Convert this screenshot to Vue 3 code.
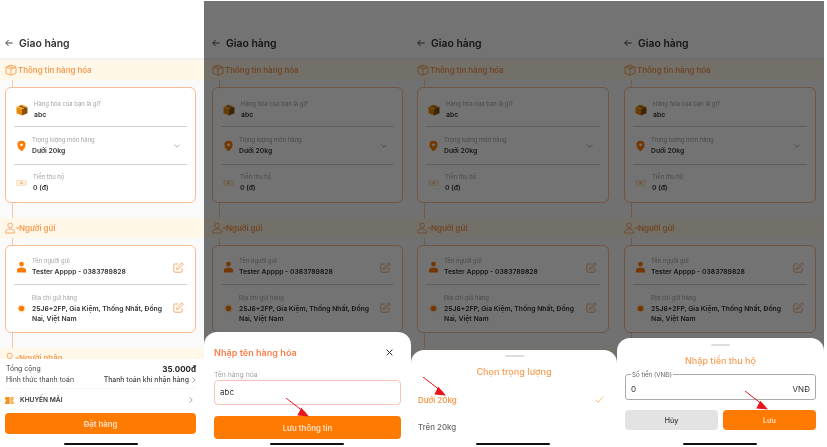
<template>
  <div class="board">
    <svg class="sprite" xmlns="http://www.w3.org/2000/svg">
      <symbol id="box-line" viewBox="0 0 12 12">
        <path d="M1 3.2 6 1l5 2.2v6L6 11.2 1 9.2zM1 3.2l5 2 5-2M6 5.2v6M3.5 2.1l5 2.1" fill="none" stroke="#f5a860" stroke-width="1" stroke-linejoin="round" />
      </symbol>
      <symbol id="box-fill" viewBox="0 0 12 12">
        <path d="M6 .6 11.5 3 6 5.3.5 3z" fill="#f4a12e" />
        <path d="M.5 3 6 5.3v6.2L.5 9.2z" fill="#e8890c" />
        <path d="M11.5 3 6 5.3v6.2l5.5-2.3z" fill="#8a5208" />
        <path d="M3 1.9 8.6 4.2v2l1-.4v-2L4 1.5z" fill="#5d3806" />
      </symbol>
      <symbol id="pin" viewBox="0 0 9 11">
        <path d="M4.5.3A4.1 4.1 0 0 0 .4 4.4c0 2.6 2.7 5 4.1 6.3 1.4-1.3 4.1-3.7 4.1-6.3A4.1 4.1 0 0 0 4.5.3z" fill="#ff7a00" />
        <circle cx="4.5" cy="4.3" r="1.4" fill="#fff" />
      </symbol>
      <symbol id="money" viewBox="0 0 12 8">
        <rect x=".3" y=".6" width="11.4" height="6.8" rx=".8" fill="#fbe3c4" />
        <rect x="2" y="1.8" width="8" height="4.4" fill="#fdf1df" />
        <circle cx="6" cy="4" r="1.3" fill="#f6b56c" />
      </symbol>
      <symbol id="sender" viewBox="0 0 15 12">
        <circle cx="5.5" cy="3.2" r="2.5" fill="none" stroke="#f5a462" stroke-width="1" />
        <path d="M.7 11.4v-1c0-2 1.8-3.400 4.800-3.400s4.800 1.400 4.800 3.400v1zM11.500 6h3M13.400 5l1.100 1-1.100 1" fill="none" stroke="#f5a462" stroke-width="1" stroke-linejoin="round" />
      </symbol>
      <symbol id="receiver" viewBox="0 0 15 12">
        <circle cx="5" cy="3.6" r="2.8" fill="none" stroke="#f5a462" stroke-width="1" />
        <path d="M5 6.4v3M2.5 10.4h5M11 6h3M13 5l1.1 1-1.1 1" fill="none" stroke="#f5a462" stroke-width="1" />
      </symbol>
      <symbol id="person" viewBox="0 0 9 11">
        <circle cx="4.5" cy="2.6" r="2.4" fill="#ff7a00" />
        <path d="M0 11V8.6C0 7 1.8 6 4.5 6S9 7 9 8.6V11z" fill="#ff7a00" />
      </symbol>
      <symbol id="dot" viewBox="0 0 9 9">
        <circle cx="4.5" cy="4.5" r="4.4" fill="#fff0d8" />
        <circle cx="4.5" cy="4.5" r="2.8" fill="#ff7a00" />
      </symbol>
      <symbol id="edit" viewBox="0 0 11 11">
        <path d="M9 6.2v3a1 1 0 0 1-1 1H1.8a1 1 0 0 1-1-1V3a1 1 0 0 1 1-1h3" fill="none" stroke="#f7a86a" stroke-width="1" />
        <path d="m4 5.6 4.8-4.800 1.400 1.400L5.400 7l-1.800.4z" fill="none" stroke="#f7a86a" stroke-width="1" stroke-linejoin="round" />
      </symbol>
      <symbol id="coupon" viewBox="0 0 10 8">
        <path d="M.6 0h4.6v8H.6a.6.6 0 0 1-.6-.6V5.2a1.2 1.2 0 0 0 0-2.400V.6A.6.6 0 0 1 .6 0z" fill="#fb8f1f" />
        <path d="M6 0h3.400a.6.6 0 0 1 .6.6v2.200a1.200 1.200 0 0 0 0 2.400v2.200a.6.6 0 0 1-.6.6H6z" fill="#fdb25c" />
      </symbol>
    </svg>

    <div v-for="phone in phones" :key="phone.id" class="phone" :class="phone.id">
      <div class="screen">
        <header class="topbar">
          <svg class="back" viewBox="0 0 8 8"><path d="M7.6 4H.8M3.6 1 .7 4l2.900 3" fill="none" stroke="#333" stroke-width=".9" /></svg>
          <span>Giao hàng</span>
        </header>

        <div class="scroll">
          <div class="band">
            <svg class="band-icon"><use href="#box-line" /></svg>
            <span>Thông tin hàng hóa</span>
          </div>
          <div class="spine short"></div>
          <div class="card">
            <div v-for="row in goods" :key="row.label" class="row" :class="row.cls">
              <svg class="row-icon" :class="row.icon"><use :href="'#' + row.icon" /></svg>
              <div class="row-text">
                <div class="label">{{ row.label }}</div>
                <div class="value">{{ row.value }}</div>
              </div>
              <svg v-if="row.chevron" class="chevron" viewBox="0 0 6 4"><path d="m.4.6 2.6 2.6L5.6.6" fill="none" stroke="#777" stroke-width=".6" /></svg>
            </div>
          </div>
          <div class="spine"></div>

          <div class="band">
            <svg class="band-icon wide"><use href="#sender" /></svg>
            <span>Người gửi</span>
          </div>
          <div class="spine short"></div>
          <div class="card">
            <div v-for="row in sender" :key="row.label" class="row" :class="row.cls">
              <svg class="row-icon" :class="row.icon"><use :href="'#' + row.icon" /></svg>
              <div class="row-text">
                <div class="label">{{ row.label }}</div>
                <div class="value">{{ row.value }}</div>
              </div>
              <svg class="edit"><use href="#edit" /></svg>
            </div>
          </div>
          <div class="spine"></div>

          <div class="band">
            <svg class="band-icon wide"><use href="#receiver" /></svg>
            <span>Người nhận</span>
          </div>
        </div>

        <footer class="checkout">
          <div class="line">
            <span>Tổng cộng</span>
            <b class="total">35.000đ</b>
          </div>
          <div class="line">
            <span>Hình thức thanh toán</span>
            <span class="pay">Thanh toán khi nhận hàng
              <svg class="more" viewBox="0 0 4 6"><path d="m.6.4 2.6 2.6L.6 5.6" fill="none" stroke="#555" stroke-width=".6" /></svg>
            </span>
          </div>
          <div class="promo">
            <svg class="coupon"><use href="#coupon" /></svg>
            <span>KHUYẾN MÃI</span>
            <svg class="more" viewBox="0 0 4 6"><path d="m.6.4 2.6 2.6L.6 5.6" fill="none" stroke="#555" stroke-width=".6" /></svg>
          </div>
          <button class="primary order">Đặt hàng</button>
          <div class="home"></div>
        </footer>
      </div>

      <template v-if="phone.sheet">
        <div class="backdrop"></div>

        <div v-if="phone.sheet === 'name'" class="sheet sheet-name">
          <div class="name-head">
            <span>Nhập tên hàng hóa</span>
            <svg class="close" viewBox="0 0 8 8"><path d="m.7.7 6.6 6.6M7.3.7.7 7.3" fill="none" stroke="#222" stroke-width="1.1" /></svg>
          </div>
          <div class="field-label">Tên hàng hóa</div>
          <div class="input">abc</div>
          <button class="primary save">Lưu thông tin</button>
          <div class="home"></div>
        </div>

        <div v-else-if="phone.sheet === 'weight'" class="sheet sheet-weight">
          <div class="grip"></div>
          <div class="sheet-title">Chọn trọng lượng</div>
          <div class="option active">
            <span>Dưới 20kg</span>
            <svg class="check" viewBox="0 0 9 7"><path d="m.6 3.8 2.6 2.400L8.400.7" fill="none" stroke="#f7a35c" stroke-width=".8" /></svg>
          </div>
          <div class="option">
            <span>Trên 20kg</span>
          </div>
          <div class="home"></div>
        </div>

        <div v-else class="sheet sheet-amount">
          <div class="grip"></div>
          <div class="sheet-title">Nhập tiền thu hộ</div>
          <fieldset class="amount">
            <legend>Số tiền (VNĐ)</legend>
            <span>0</span>
            <span>VNĐ</span>
          </fieldset>
          <div class="actions">
            <button class="cancel">Hủy</button>
            <button class="primary">Lưu</button>
          </div>
          <div class="home"></div>
        </div>

        <svg class="arrow" :class="'arrow-' + phone.sheet" viewBox="0 0 24 19">
          <path d="M0 0 20 15.5" fill="none" stroke="#e8141c" stroke-width="1" />
          <path d="M23 18.4 11.3 17.400 15.300 9.700z" fill="#e8141c" />
        </svg>
      </template>
    </div>
  </div>
</template>

<script setup>
const phones = [
  { id: 'p1', sheet: null },
  { id: 'p2', sheet: 'name' },
  { id: 'p3', sheet: 'weight' },
  { id: 'p4', sheet: 'amount' }
]

const goods = [
  { cls: 'r-goods', icon: 'box-fill', label: 'Hàng hóa của bạn là gì?', value: 'abc' },
  { cls: 'r-weight', icon: 'pin', label: 'Trọng lượng món hàng', value: 'Dưới 20kg', chevron: true },
  { cls: 'r-cod', icon: 'money', label: 'Tiền thu hộ', value: '0 (đ)' }
]

const sender = [
  { cls: 'r-name', icon: 'person', label: 'Tên người gửi', value: 'Tester Apppp - 0383789828' },
  { cls: 'r-addr', icon: 'dot', label: 'Địa chỉ gửi hàng', value: '25J6+2FP, Gia Kiệm, Thống Nhất, Đồng Nai, Việt Nam' }
]
</script>

<style>
html,
body {
  margin: 0;
  background: #fff;
}
</style>

<style scoped>
.board {
  display: flex;
  width: 827px;
  height: 447px;
  overflow: hidden;
  font-family: Inter, "Noto Sans", sans-serif;
  color: #333;
  filter: blur(.3px);
}

.sprite {
  display: none;
}

.phone {
  position: relative;
  flex: none;
  height: 447px;
  overflow: hidden;
  --inset: 8px;
}
.p1 { width: 204px; --inset: 5px; }
.p2 { width: 207px; --inset: 8px; }
.p3 { width: 206px; --inset: 6px; }
.p4 { width: 207px; --inset: 7px; }

.screen {
  display: flex;
  flex-direction: column;
  height: 100%;
  background: #fff;
}

.topbar {
  flex: none;
  display: flex;
  align-items: center;
  gap: 6px;
  box-sizing: border-box;
  height: 60px;
  padding: 28px 0 0 var(--inset);
  border-bottom: 2px solid #f2f2f2;
  font-size: 10.4px;
  font-weight: 600;
}
.back {
  width: 8px;
  height: 8px;
}

.scroll {
  flex: 1;
  min-height: 0;
  overflow: hidden;
  background: #fafafa;
}

.band {
  display: flex;
  align-items: center;
  gap: 1px;
  height: 20px;
  padding-left: var(--inset);
  background: #fff8e9;
  font-size: 7.9px;
  font-weight: 600;
  color: #f79b50;
}
.band-icon {
  width: 12px;
  height: 12px;
}
.band-icon.wide {
  width: 14px;
  margin-right: -1px;
}

.spine {
  width: 1px;
  height: 15px;
  margin-left: calc(var(--inset) + 7px);
  background: #f9c9a2;
}
.spine.short {
  height: 7px;
}

.card {
  margin: 0 8px 0 var(--inset);
  padding: 0 8px;
  border: 1px solid #f7bd94;
  border-radius: 6px;
  background: #fff;
}

.row {
  display: flex;
  align-items: center;
  box-sizing: border-box;
  height: 38px;
  padding-left: 2px;
  border-bottom: 1px solid #d0d0d0;
}
.row:last-child {
  border-bottom: 0;
}
.r-goods { height: 39px; padding-top: 5px; }
.r-weight { height: 38px; }
.r-cod { height: 37px; padding-bottom: 2px; }
.r-name { height: 39px; padding-top: 4px; }
.r-addr { height: 47px; }

.row-icon {
  flex: none;
  width: 12px;
  height: 12px;
  margin-right: 6px;
}
.row-icon.pin {
  width: 9px;
  margin: 0 6px 0 1px;
}
.row-icon.money {
  width: 11px;
  margin-right: 6px;
}
.row-icon.person {
  width: 9px;
  margin: 0 6px 0 1px;
}
.row-icon.dot {
  width: 9px;
  height: 9px;
  margin: 0 6px 0 1px;
}

.row-text {
  flex: 1;
  min-width: 0;
}
.label {
  font-size: 5.9px;
  line-height: 8px;
  color: #a3a3a3;
  margin-bottom: 2px;
}
.value {
  font-size: 6.8px;
  line-height: 10px;
  font-weight: 600;
  color: #333;
}

.chevron {
  width: 6px;
  height: 4px;
  margin-right: 7px;
}

.edit {
  flex: none;
  align-self: flex-start;
  width: 11px;
  height: 11px;
  margin: 12px 3px 0 7px;
}
.r-addr .edit {
  margin-top: 17px;
}

.checkout {
  flex: none;
  box-sizing: border-box;
  height: 88px;
  padding: 4px 8px 0 var(--inset);
  background: #fff;
  position: relative;
}
.line {
  display: flex;
  justify-content: space-between;
  align-items: center;
  height: 11px;
  padding-left: 1px;
  font-size: 6.9px;
  color: #444;
}
.total {
  font-size: 8px;
  font-weight: 700;
  color: #222;
}
.pay {
  display: flex;
  align-items: center;
  gap: 3px;
  font-weight: 500;
}
.more {
  flex: none;
  width: 4px;
  height: 6px;
}
.promo {
  display: flex;
  align-items: center;
  gap: 6px;
  height: 22px;
  margin-top: 3px;
  padding-right: 3px;
  border-top: 1px solid #f6f6f6;
  font-size: 6.6px;
  font-weight: 600;
}
.promo span {
  flex: 1;
}
.coupon {
  width: 9px;
  height: 7px;
}

button {
  border: 0;
  font-family: inherit;
  padding: 0;
}
.primary {
  border-radius: 4px;
  background: #ff7a00;
  color: #ffe3c8;
  font-weight: 600;
  font-size: 7.8px;
}
.order {
  display: block;
  width: 100%;
  height: 21px;
  margin-top: 2px;
}

.home {
  position: absolute;
  left: 50%;
  bottom: 2px;
  width: 74px;
  height: 2px;
  margin-left: -38px;
  border-radius: 1px;
  background: #111;
}

.backdrop {
  position: absolute;
  inset: 1px 0 0;
  background: rgba(0, 0, 0, .55);
}

.sheet {
  position: absolute;
  left: 0;
  right: 0;
  bottom: 0;
  box-sizing: border-box;
  background: #fff;
  border-radius: 13px 13px 0 0;
}

.sheet-name {
  top: 332px;
  padding: 14px 10px 0;
}
.name-head {
  display: flex;
  justify-content: space-between;
  align-items: center;
  height: 12px;
  padding-right: 8px;
  font-size: 9.1px;
  font-weight: 600;
  color: #fa7f4c;
}
.close {
  width: 7px;
  height: 7px;
}
.field-label {
  margin-top: 13px;
  font-size: 6.8px;
  line-height: 8px;
  color: #a3a3a3;
}
.input {
  box-sizing: border-box;
  height: 25px;
  margin-top: 1px;
  padding: 0 5px;
  border: 1px solid #f8c3b4;
  border-radius: 4px;
  font-size: 8px;
  line-height: 23px;
}
.save {
  display: block;
  width: 100%;
  height: 23px;
  margin-top: 11px;
}

.grip {
  width: 19px;
  height: 2px;
  margin: 0 auto;
  border-radius: 1px;
  background: #ddd;
}
.sheet-title {
  text-align: center;
  font-size: 9.1px;
  font-weight: 500;
  color: #f99c52;
}

.sheet-weight {
  top: 350px;
  padding-top: 5px;
}
.sheet-weight .sheet-title {
  margin-top: 9px;
  line-height: 12px;
}
.option {
  display: flex;
  justify-content: space-between;
  align-items: center;
  height: 27px;
  padding: 0 13px 0 7px;
  font-size: 7.9px;
  font-weight: 500;
  color: #666;
}
.sheet-weight .option.active {
  margin-top: 8px;
  color: #f79b50;
  font-weight: 600;
}
.check {
  width: 9px;
  height: 7px;
}

.sheet-amount {
  top: 338px;
  padding: 6px 8px 0;
}
.sheet-amount .sheet-title {
  margin-top: 9px;
  line-height: 12px;
  font-size: 9px;
}
.amount {
  display: flex;
  justify-content: space-between;
  align-items: center;
  box-sizing: border-box;
  height: 29px;
  margin: 4px 0 0;
  padding: 0 5px;
  border: 1px solid #aaa;
  border-radius: 3px;
  font-size: 8px;
}
.amount legend {
  padding: 0 1px;
  font-size: 6.2px;
  line-height: 7px;
  color: #666;
}
.actions {
  display: grid;
  grid-template-columns: 1fr 1fr;
  gap: 5px;
  margin-top: 10px;
}
.actions button {
  height: 20px;
  border-radius: 4px;
  font-size: 7px;
}
.actions .cancel {
  background: #e3e3e3;
  color: #333;
  font-weight: 500;
}

.arrow {
  position: absolute;
  width: 24px;
  height: 19px;
}
.arrow-name { left: 82px; top: 398px; }
.arrow-weight { left: 12px; top: 377px; }
.arrow-amount { left: 128px; top: 391px; }
</style>
